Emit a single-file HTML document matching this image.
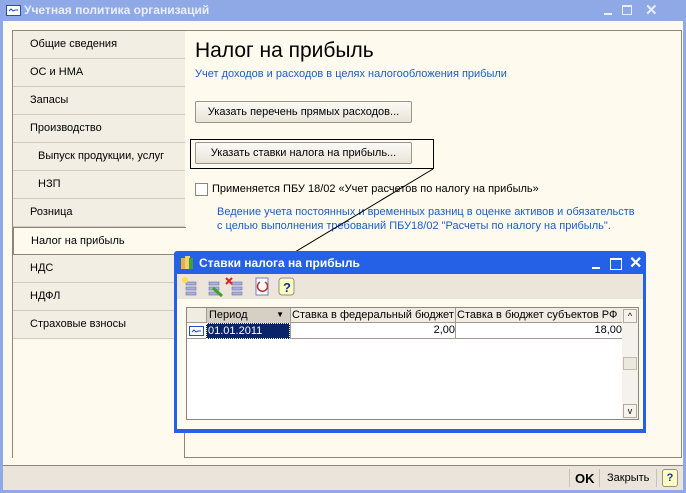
<!DOCTYPE html>
<html><head><meta charset="utf-8"><style>
*{margin:0;padding:0;box-sizing:border-box}
body{width:686px;height:493px;overflow:hidden;background:#fffaee;font-family:"Liberation Sans",sans-serif;font-size:11px;color:#000;position:relative}
.abs{position:absolute;white-space:nowrap}
.win{left:0;top:0;width:686px;height:493px;border:3px solid #8fa8e6;border-top:none}
.tb{left:0;top:0;width:686px;height:21px;background:#8fa9e7;color:#e8eefc;font-weight:bold;font-size:12px;line-height:21px;padding-left:24px}
.tab{position:absolute;left:13px;width:172px;height:28px;background:#f3eee3;border-bottom:1px solid #d0cbbf;line-height:27px;padding-left:17px}
.btn{position:absolute;background:linear-gradient(#fbfaf6,#e8e4d8);border:1px solid #9a968c;border-radius:2px;text-align:center;line-height:20px}
.blue{color:#1a5dc8}
.h{position:absolute;top:308px;height:15px;line-height:14px;overflow:hidden;white-space:nowrap}
</style></head><body>
<div class="abs win"></div>
<div class="abs tb">Учетная политика организаций</div>
<svg class="abs" style="left:6px;top:5px" width="15" height="11"><rect x="0.5" y="0.5" width="14" height="10" fill="#fff" stroke="#2050c0"/><polyline points="3,6 5,4 7,6 9,5 12,5" stroke="#2050c0" fill="none"/></svg>
<div class="abs" style="left:604px;top:13px;width:8px;height:2px;background:#e8eefc"></div>
<div class="abs" style="left:622px;top:5px;width:10px;height:10px;border:1.5px solid #e8eefc;border-top-width:2.5px"></div>
<div class="abs" style="left:645px;top:1px;color:#e8eefc;font-size:15px;font-weight:bold">✕</div>

<div class="abs" style="left:12px;top:30px;width:670px;height:428px;border:1px solid #8b877c;border-right:none;border-bottom:none"></div>
<div class="abs" style="left:184px;top:31px;width:498px;height:427px;border:1px solid #8b877c;border-top:none;background:#fffaee"></div>
<div class="abs" style="left:184px;top:457px;width:498px;height:1px;background:#8b877c"></div>
<div class="abs" style="left:184px;top:30px;width:498px;height:1px;background:#8b877c"></div>

<div class="tab" style="top:31px">Общие сведения</div>
<div class="tab" style="top:59px">ОС и НМА</div>
<div class="tab" style="top:87px">Запасы</div>
<div class="tab" style="top:115px">Производство</div>
<div class="tab" style="top:143px;padding-left:25px">Выпуск продукции, услуг</div>
<div class="tab" style="top:171px;padding-left:25px">НЗП</div>
<div class="tab" style="top:199px">Розница</div>
<div class="tab" style="top:227px;background:#fffaee;border:1px solid #8b877c;border-right:none;width:173px">Налог на прибыль</div>
<div class="tab" style="top:255px">НДС</div>
<div class="tab" style="top:283px">НДФЛ</div>
<div class="tab" style="top:311px">Страховые взносы</div>

<div class="abs" style="left:195px;top:39px;font-size:21px">Налог на прибыль</div>
<div class="abs blue" style="left:195px;top:68px">Учет доходов и расходов в целях налогообложения прибыли</div>
<div class="btn" style="left:195px;top:101px;width:217px;height:22px">Указать перечень прямых расходов...</div>
<div class="abs" style="left:190px;top:139px;width:244px;height:30px;border:1px solid #000"></div>
<div class="btn" style="left:195px;top:142px;width:217px;height:22px">Указать ставки налога на прибыль...</div>
<div class="abs" style="left:195px;top:183px;width:13px;height:13px;border:1px solid #8b877c;background:#fff"></div>
<div class="abs" style="left:212px;top:183px">Применяется ПБУ 18/02 «Учет расчетов по налогу на прибыль»</div>
<div class="abs blue" style="left:217px;top:205px;line-height:14px">Ведение учета постоянных и временных разниц в оценке активов и обязательств<br>с целью выполнения требований ПБУ18/02 "Расчеты по налогу на прибыль".</div>
<svg class="abs" style="left:0;top:0" width="686" height="493"><line x1="433" y1="169" x2="285" y2="258" stroke="#000" stroke-width="1"/></svg>

<div class="abs" style="left:174px;top:251px;width:472px;height:182px;background:#2461e6;border-radius:3px 3px 0 0"></div>
<div class="abs" style="left:199px;top:252px;height:22px;line-height:22px;color:#fff;font-weight:bold;font-size:12px">Ставки налога на прибыль</div>
<svg class="abs" style="left:180px;top:255px" width="14" height="15"><rect x="1" y="3" width="5" height="11" fill="#e8b040"/><rect x="5" y="1" width="5" height="13" fill="#f0d070"/><rect x="9" y="3" width="4" height="11" fill="#40a040"/></svg>
<div class="abs" style="left:592px;top:267px;width:8px;height:2px;background:#fff"></div>
<div class="abs" style="left:610px;top:258px;width:12px;height:12px;border:1.5px solid #fff;border-top-width:2.5px"></div>
<div class="abs" style="left:629px;top:253px;color:#fff;font-size:16px;font-weight:bold">✕</div>
<div class="abs" style="left:177px;top:274px;width:466px;height:155px;background:#fffaee"></div>
<div class="abs" style="left:177px;top:274px;width:466px;height:25px;background:#ece6da"></div>
<svg class="abs" style="left:180px;top:276px" width="120" height="22">
<g fill="#aab0dd" stroke="#6670b0" stroke-width="0.6"><rect x="6" y="6" width="10" height="3"/><rect x="6" y="11" width="10" height="3"/><rect x="6" y="16" width="10" height="3"/>
<rect x="29" y="6" width="10" height="3"/><rect x="29" y="11" width="10" height="3"/><rect x="29" y="16" width="10" height="3"/>
<rect x="52" y="6" width="10" height="3"/><rect x="52" y="11" width="10" height="3"/><rect x="52" y="16" width="10" height="3"/></g>
<circle cx="5" cy="4" r="3" fill="#ffe040"/>
<line x1="33" y1="12" x2="42" y2="20" stroke="#40a020" stroke-width="3"/>
<path d="M46 2l6 6M52 2l-6 6" stroke="#e02020" stroke-width="2"/>
<rect x="76" y="2" width="12" height="17" fill="#fff" stroke="#7080c0"/><path d="M80 6a5 5 0 1 0 5 0" stroke="#c03030" fill="none" stroke-width="1.5"/>
<rect x="99" y="2" width="15" height="17" rx="3" fill="#ffffc0" stroke="#909090"/><text x="103" y="16" font-size="13" font-weight="bold" fill="#1030a0" font-family="Liberation Sans">?</text>
</svg>
<div class="abs" style="left:186px;top:307px;width:453px;height:113px;border:1px solid #8b877c;background:#fff"></div>
<div class="abs" style="left:187px;top:308px;width:435px;height:15px;background:#f0ece2;border-bottom:1px solid #a09c90"></div>
<div class="h" style="left:206px;width:84px;background:#d6d0c4;border-left:1px solid #a09c90;padding-left:2px">Период<span style="position:absolute;right:6px;font-size:8px">▼</span></div>
<div class="h" style="left:290px;width:165px;border-left:1px solid #a09c90;padding-left:1px">Ставка в федеральный бюджет</div>
<div class="h" style="left:455px;width:167px;border-left:1px solid #a09c90;padding-left:1px">Ставка в бюджет субъектов РФ</div>
<div class="abs" style="left:187px;top:323px;width:435px;height:16px;border-bottom:1px solid #a09c90"></div>
<svg class="abs" style="left:189px;top:326px" width="15" height="10"><rect x="0.5" y="0.5" width="14" height="9" fill="#fff" stroke="#2050c0"/><polyline points="3,6 5,4 7,6 9,5 12,5" stroke="#2050c0" fill="none"/></svg>
<div class="abs" style="left:206px;top:323px;width:84px;height:16px;background:#0a246a;color:#fff;border:1px dotted #fff;line-height:14px;padding-left:1px">01.01.2011</div>
<div class="abs" style="left:290px;top:323px;width:165px;height:16px;border-left:1px solid #a09c90;text-align:right;line-height:15px">2,00</div>
<div class="abs" style="left:455px;top:323px;width:167px;height:16px;border-left:1px solid #a09c90;text-align:right;line-height:15px">18,00</div>
<div class="abs" style="left:622px;top:308px;width:16px;height:111px;background:#f4f2ea"></div>
<div class="abs" style="left:623px;top:309px;width:14px;height:14px;border:1px solid #b0ac9f;font-size:9px;text-align:center;line-height:12px;background:#f5f3ec">^</div>
<div class="abs" style="left:623px;top:357px;width:14px;height:13px;border:1px solid #c0bcaf;background:#ebe8dd"></div>
<div class="abs" style="left:623px;top:404px;width:14px;height:14px;border:1px solid #b0ac9f;font-size:9px;text-align:center;line-height:12px;background:#f5f3ec">v</div>

<div class="abs" style="left:3px;top:465px;width:680px;height:25px;background:#ebe4da;border-top:1px solid #8b877c"></div>
<div class="abs" style="left:569px;top:469px;width:1px;height:18px;background:#c8c2b4"></div>
<div class="abs" style="left:575px;top:471px;font-weight:bold;font-size:13px">OK</div>
<div class="abs" style="left:599px;top:469px;width:1px;height:18px;background:#c8c2b4"></div>
<div class="abs" style="left:607px;top:472px">Закрыть</div>
<div class="abs" style="left:656px;top:469px;width:1px;height:18px;background:#c8c2b4"></div>
<div class="abs" style="left:662px;top:469px;width:16px;height:18px;border:1px solid #909090;border-radius:3px;background:#ffffc0;color:#1030a0;font-weight:bold;text-align:center;line-height:16px">?</div>
</body></html>
